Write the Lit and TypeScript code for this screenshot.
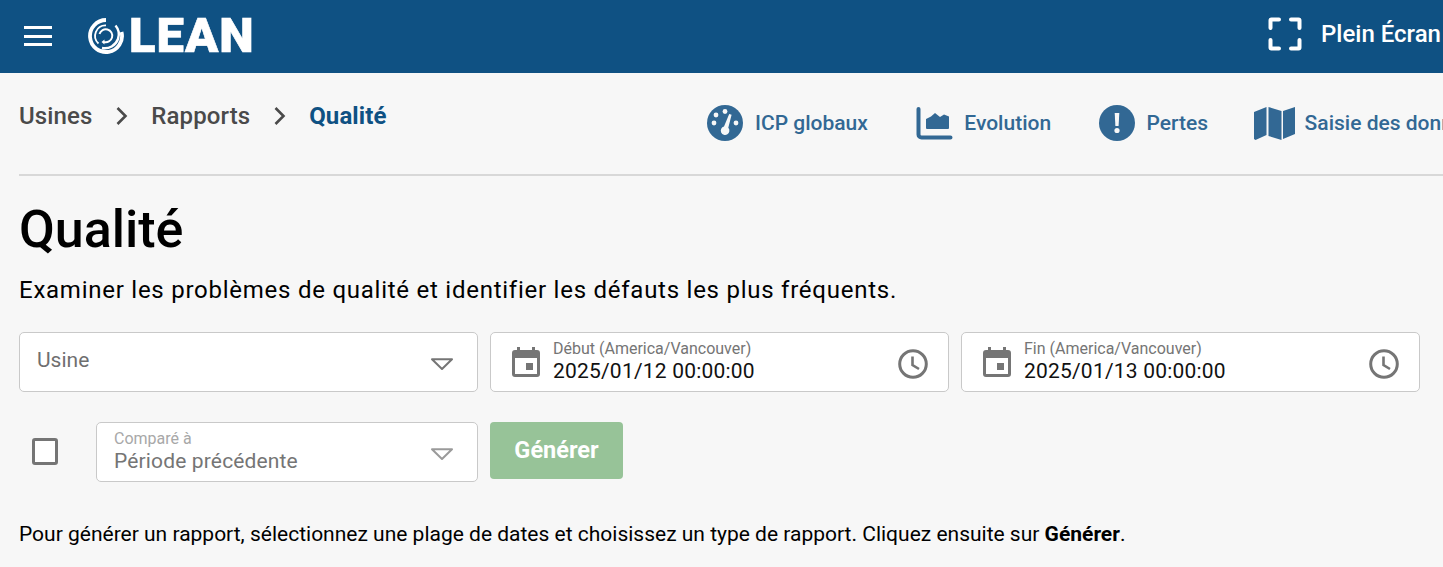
import { LitElement, html, css } from "lit";
import { customElement } from "lit/decorators.js";

const caret = html`<svg class="caret" width="24" height="14" viewBox="0 0 24 14"><path d="M2 2.2h20L12 12z" fill="none" stroke="currentColor" stroke-width="2" stroke-linejoin="round"/></svg>`;
const calendar = html`<svg class="cal" width="30" height="32" viewBox="0 0 30 32"><path fill="#757575" d="M6 1h3v3h12V1h3v3h2a3 3 0 0 1 3 3v21a3 3 0 0 1-3 3H4a3 3 0 0 1-3-3V7a3 3 0 0 1 3-3h2zM4 12v16h22V12z"/><rect x="15" y="17" width="7" height="7" fill="#757575"/></svg>`;
const clock = html`<svg class="clock" width="32" height="32" viewBox="0 0 32 32"><circle cx="16" cy="16" r="13.300" fill="none" stroke="#757575" stroke-width="3"/><path d="M15.500 8.500V17l6.500 4" fill="none" stroke="#757575" stroke-width="2.600"/></svg>`;

@customElement("app-root")
export class AppRoot extends LitElement {
  static styles = css`
    :host { display: block; width: 1443px; height: 567px; overflow: hidden; background: #f7f7f7; font-family: Roboto, "Liberation Sans", sans-serif; color: #000; }
    * { box-sizing: border-box; }
    header { height: 73px; background: #0f5183; color: #fff; display: flex; align-items: center; padding-left: 24px; white-space: nowrap; }
    .menu { width: 28px; height: 20px; display: flex; flex-direction: column; justify-content: space-between; margin-top: -1px; }
    .menu i { display: block; height: 3px; background: #fff; }
    .logo-mark { margin-left: 35px; margin-top: -1px; }
    .logo-text { font-family: Roboto, sans-serif; font-weight: 900; font-size: 49px; letter-spacing: 1px; line-height: 1; margin-left: 5px; margin-top: -2px; -webkit-text-stroke: .6px #fff; }
    .full { margin-left: auto; display: flex; align-items: center; gap: 19px; font-size: 24px; font-weight: 500; margin-top: -5px; width: 175px; }
    main { padding: 0 0 0 19px; }
    .top { height: 103px; border-bottom: 2px solid #d8d8d8; display: flex; white-space: nowrap; overflow: hidden; }
    .crumbs { display: flex; align-items: center; height: 86px; font-size: 24px; font-weight: 500; color: #4a4a4a; width: 668px; flex: none; letter-spacing: .1px; }
    .crumbs svg { margin: 0 21px 0 22px; flex: none; }
    .crumbs b { font-weight: 700; color: #0f5183; }
    .nav { display: flex; align-items: center; height: 100px; font-size: 21px; font-weight: 500; color: #326894; padding-left: 20px; }
    .nav span.item { display: flex; align-items: center; gap: 12px; margin-right: 48.500px; }
    .nav span.item.evo { gap: 11px; margin-right: 47.500px; }
    .nav span.item.loss { margin-right: 45.500px; }
    .nav span.item.map { gap: 10px; }
    h1 { margin: 0; font-size: 52px; font-weight: 500; line-height: 58px; padding-top: 25px; height: 83px; }
    p.sub { margin: 0; font-size: 24px; line-height: 28px; letter-spacing: .75px; padding-top: 17px; height: 73px; white-space: nowrap; }
    .row { display: grid; grid-template-columns: repeat(3, 459px); column-gap: 12px; }
    .row2 { margin-top: 30px; }
    .field { height: 60px; background: #fff; border: 1px solid #c9c9c9; border-radius: 5px; display: flex; align-items: center; position: relative; padding: 0 17px; }
    .plain { font-size: 21px; color: #6f6f6f; margin-top: -4px; }
    .caret { margin-left: auto; color: #757575; margin-right: 6px; margin-top: 3px; flex: none; }
    .date { padding: 0 19px 0 20px; }
    .cal { flex: none; margin-right: 12px; }
    .stack { display: flex; flex-direction: column; margin-top: 0; }
    .stack small { font-size: 16px; line-height: 18px; color: #757575; margin-top: -1px; }
    .stack span { font-size: 21px; line-height: 25px; color: #111; letter-spacing: .2px; margin-top: 1px; }
    .clock { margin-left: auto; flex: none; margin-top: 3px; }
    .cmp { display: flex; align-items: center; }
    .check { width: 26px; height: 27px; border: 3px solid #757575; border-radius: 3px; background: #fff; margin: -2px 38px 0 13px; flex: none; }
    .cmp .field { flex: 1; }
    .off small { color: #a8a8a8; }
    .off span { color: #757575; letter-spacing: .15px; }
    .off .caret { color: #9a9a9a; }
    .go { width: 133px; height: 57px; background: #97c398; color: #fff; border: 0; border-radius: 4px; font: 700 23.500px Roboto, sans-serif; letter-spacing: 0; display: flex; align-items: center; justify-content: center; padding: 0 0 1px; }
    p.hint { margin: 0; padding-top: 38px; font-size: 21px; line-height: 28px; white-space: nowrap; }
    p.hint b { font-weight: 700; }
  `;

  render() {
    const chev = html`<svg width="16" height="22" viewBox="0 0 16 22"><path d="M3.500 3l8 8-8 8" fill="none" stroke="#4a4a4a" stroke-width="2.600"/></svg>`;
    return html`
      <header>
        <div class="menu"><i></i><i></i><i></i></div>
        <svg class="logo-mark" width="37" height="38" viewBox="0 0 37 38">
          <path d="M19 3A16 16 0 1 0 34.500 15" fill="none" stroke="#fff" stroke-width="3.800"/>
          <path d="M19 8.300A10.500 10.500 0 0 0 11.500 26.500" fill="none" stroke="#fff" stroke-width="1.800"/>
          <path d="M28.500 8.500A14 14 0 0 1 31 22A14 14 0 0 1 15 31" fill="none" stroke="#fff" stroke-width="2.400"/>
          <path d="M12.500 17A6.500 6.500 0 1 1 17 25" fill="none" stroke="#fff" stroke-width="1.900"/>
          <path d="M14.500 25l3-2.600v5z" fill="#fff"/>
        </svg>
        <span class="logo-text">LEAN</span>
        <div class="full">
          <svg width="34" height="34" viewBox="0 0 34 34"><path d="M2.500 11V3.500a1 1 0 0 1 1-1H11M23 2.500h7.500a1 1 0 0 1 1 1V11M31.500 23v7.500a1 1 0 0 1-1 1H23M11 31.500H3.500a1 1 0 0 1-1-1V23" fill="none" stroke="#fff" stroke-width="4" stroke-linecap="round"/></svg>
          <span>Plein Écran</span>
        </div>
      </header>
      <main>
        <div class="top">
          <div class="crumbs">
            <span>Usines</span>${chev}<span>Rapports</span>${chev}<b>Qualité</b>
          </div>
          <div class="nav">
            <span class="item">
              <svg width="36" height="36" viewBox="0 0 36 36"><circle cx="18" cy="18" r="18" fill="#326894"/><circle cx="18" cy="6.500" r="2.400" fill="#f7f7f7"/><circle cx="9" cy="10" r="2.400" fill="#f7f7f7"/><circle cx="7" cy="18" r="2.400" fill="#f7f7f7"/><circle cx="29" cy="18" r="2.400" fill="#f7f7f7"/><path d="M22.200 9l2.400.8-3.300 13a4.300 4.300 0 1 1-4.300-1.300z" fill="#f7f7f7"/></svg>
              ICP globaux
            </span>
            <span class="item evo">
              <svg width="37" height="33" viewBox="0 0 37 33"><path d="M2.500 2v25.500a3 3 0 0 0 3 3H34.500" fill="none" stroke="#326894" stroke-width="4" stroke-linecap="round"/><path d="M10 21V12l5-2.500L19 6l5 4 4-2.500 5 2V21a1 1 0 0 1-1 1H11a1 1 0 0 1-1-1z" fill="#326894"/></svg>
              Evolution
            </span>
            <span class="item loss">
              <svg width="36" height="36" viewBox="0 0 36 36"><circle cx="18" cy="18" r="18" fill="#326894"/><path d="M15.700 8h4.600l-.7 13h-3.200z" fill="#f7f7f7"/><circle cx="18" cy="25.500" r="2.600" fill="#f7f7f7"/></svg>
              Pertes
            </span>
            <span class="item map">
              <svg width="41" height="33" viewBox="0 0 41 33"><path fill="#326894" d="M0 5l12.500-5v28L1.500 33 0 32zM14.500 0l13 4v29l-13-4zM29 4l12-4v27l-12 5z"/></svg>
              Saisie des données
            </span>
          </div>
        </div>
        <h1>Qualité</h1>
        <p class="sub">Examiner les problèmes de qualité et identifier les défauts les plus fréquents.</p>
        <div class="row">
          <div class="field"><span class="plain">Usine</span>${caret}</div>
          <div class="field date">${calendar}<div class="stack"><small>Début (America/Vancouver)</small><span>2025/01/12 00:00:00</span></div>${clock}</div>
          <div class="field date">${calendar}<div class="stack"><small>Fin (America/Vancouver)</small><span>2025/01/13 00:00:00</span></div>${clock}</div>
        </div>
        <div class="row row2">
          <div class="cmp">
            <div class="check"></div>
            <div class="field off"><div class="stack"><small>Comparé à</small><span>Période précédente</span></div>${caret}</div>
          </div>
          <div><button class="go">Générer</button></div>
        </div>
        <p class="hint">Pour générer un rapport, sélectionnez une plage de dates et choisissez un type de rapport. Cliquez ensuite sur <b>Générer</b>.</p>
      </main>
    `;
  }
}
